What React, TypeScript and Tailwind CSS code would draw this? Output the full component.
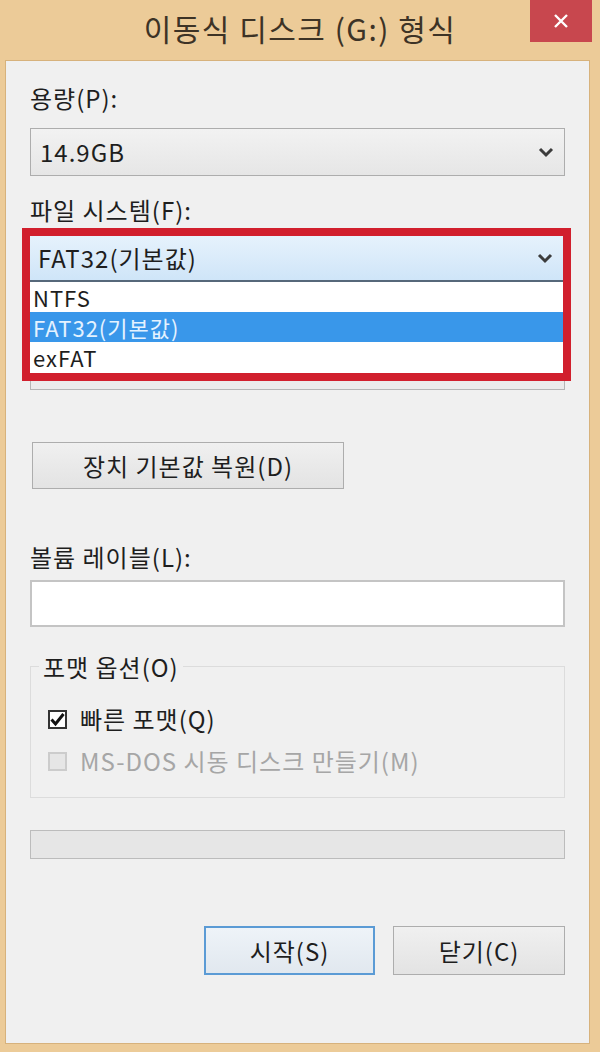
import type { ReactNode } from 'react';

const font = { fontFamily: '"Noto Sans CJK KR", "Noto Sans", sans-serif' };

function Chevron() {
  return (
    <svg width="16" height="12" viewBox="0 0 16 12" className="shrink-0">
      <polyline points="2,3 8,9 14,3" fill="none" stroke="#3c3c3c" strokeWidth="3" />
    </svg>
  );
}

function Combo({ value, active = false }: { value: string; active?: boolean }) {
  return (
    <div
      className={
        active
          ? 'h-[46px] flex items-center justify-between pl-[8px] pr-[10px] bg-gradient-to-b from-[#e6f2fc] to-[#cfe5f8] border-b-2 border-[#56687a]'
          : 'h-[48px] flex items-center justify-between pl-[9px] pr-[10px] bg-gradient-to-b from-[#f2f2f2] to-[#e6e6e6] border border-[#adadad]'
      }
    >
      <span>{value}</span>
      <Chevron />
    </div>
  );
}

function Label({ children, className = '' }: { children: ReactNode; className?: string }) {
  return <div className={`h-[28px] flex items-center ${className}`}>{children}</div>;
}

export default function App() {
  const options = ['NTFS', 'FAT32(기본값)', 'exFAT'];

  return (
    <div
      style={font}
      className="w-[600px] h-[1052px] bg-[#eccb98] flex flex-col text-[24px] leading-none tracking-[1px] text-[#1e1e1e]"
    >
      {/* title bar */}
      <div className="relative h-[60px] shrink-0 flex items-center justify-center">
        <span className="text-[30px] text-[#3d3326] tracking-[1.5px] -mt-[4px]">이동식 디스크 (G:) 형식</span>
        <button className="absolute right-[8px] top-0 w-[62px] h-[42px] bg-[#c8474e] flex items-center justify-center">
          <svg width="16" height="16" viewBox="0 0 16 16">
            <path d="M2 2 L14 14 M14 2 L2 14" stroke="#ffffff" strokeWidth="2.4" />
          </svg>
        </button>
      </div>

      {/* body */}
      <div className="flex-1 ml-[5px] mr-[10px] mb-[8px] bg-[#f0f0f0] border border-[#d7b27c] px-[24px] pt-[23px] flex flex-col">
        <Label>용량(P):</Label>
        <div className="mt-[16px]">
          <Combo value="14.9GB" />
        </div>

        <Label className="mt-[20px]">파일 시스템(F):</Label>

        <div className="mt-[4px] -ml-[8px] -mr-[6px] border-[8px] border-[#d11f2d] bg-white">
          <Combo value="FAT32(기본값)" active />
          <div className="flex flex-col pb-[1px] text-[22px]">
            {options.map((o) => (
              <div
                key={o}
                className={
                  o === 'FAT32(기본값)'
                    ? 'h-[30px] flex items-center pl-[3px] bg-[#3997ea] text-[#e4f2ff] overflow-hidden'
                    : 'h-[30px] flex items-center pl-[3px] bg-white overflow-hidden'
                }
              >
                {o}
              </div>
            ))}
          </div>
        </div>
        <div className="h-[9px] border-x border-b border-[#b5b5b5] bg-[#ebebeb]" />

        <button className="mt-[52px] ml-[2px] w-[312px] h-[47px] bg-gradient-to-b from-[#f0f0f0] to-[#e3e3e3] border border-[#adadad] flex items-center justify-center">
          장치 기본값 복원(D)
        </button>

        <Label className="mt-[54px]">볼륨 레이블(L):</Label>
        <div className="mt-[9px] h-[47px] bg-white border-2 border-[#c4c4c4]" />

        <div className="relative mt-[39px] h-[132px] border border-[#dcdcdc] pt-[38px] pl-[17px] flex flex-col gap-[14px]">
          <span className="absolute -top-[14px] left-[8px] px-[4px] bg-[#f0f0f0] leading-[28px]">포맷 옵션(O)</span>
          <div className="flex items-center gap-[13px] h-[28px]">
            <div className="w-[19px] h-[19px] border-2 border-[#333333] bg-white flex items-center justify-center">
              <svg width="15" height="15" viewBox="0 0 15 15">
                <path d="M1.5 7.5 L5.5 12 L13.5 2" fill="none" stroke="#111111" strokeWidth="3" />
              </svg>
            </div>
            <span>빠른 포맷(Q)</span>
          </div>
          <div className="flex items-center gap-[13px] h-[28px] text-[#a6a6a6]">
            <div className="w-[19px] h-[19px] border-2 border-[#cccccc] bg-[#e6e6e6]" />
            <span>MS-DOS 시동 디스크 만들기(M)</span>
          </div>
        </div>

        <div className="mt-[32px] h-[29px] bg-[#e6e6e6] border border-[#bcbcbc]" />

        <div className="mt-[67px] flex justify-end gap-[18px]">
          <button className="w-[171px] h-[49px] bg-gradient-to-b from-[#eef3f8] to-[#e1e8ef] border-2 border-[#5b9bd5] flex items-center justify-center">
            시작(S)
          </button>
          <button className="w-[172px] h-[49px] bg-gradient-to-b from-[#f0f0f0] to-[#e3e3e3] border border-[#adadad] flex items-center justify-center">
            닫기(C)
          </button>
        </div>
      </div>
    </div>
  );
}
